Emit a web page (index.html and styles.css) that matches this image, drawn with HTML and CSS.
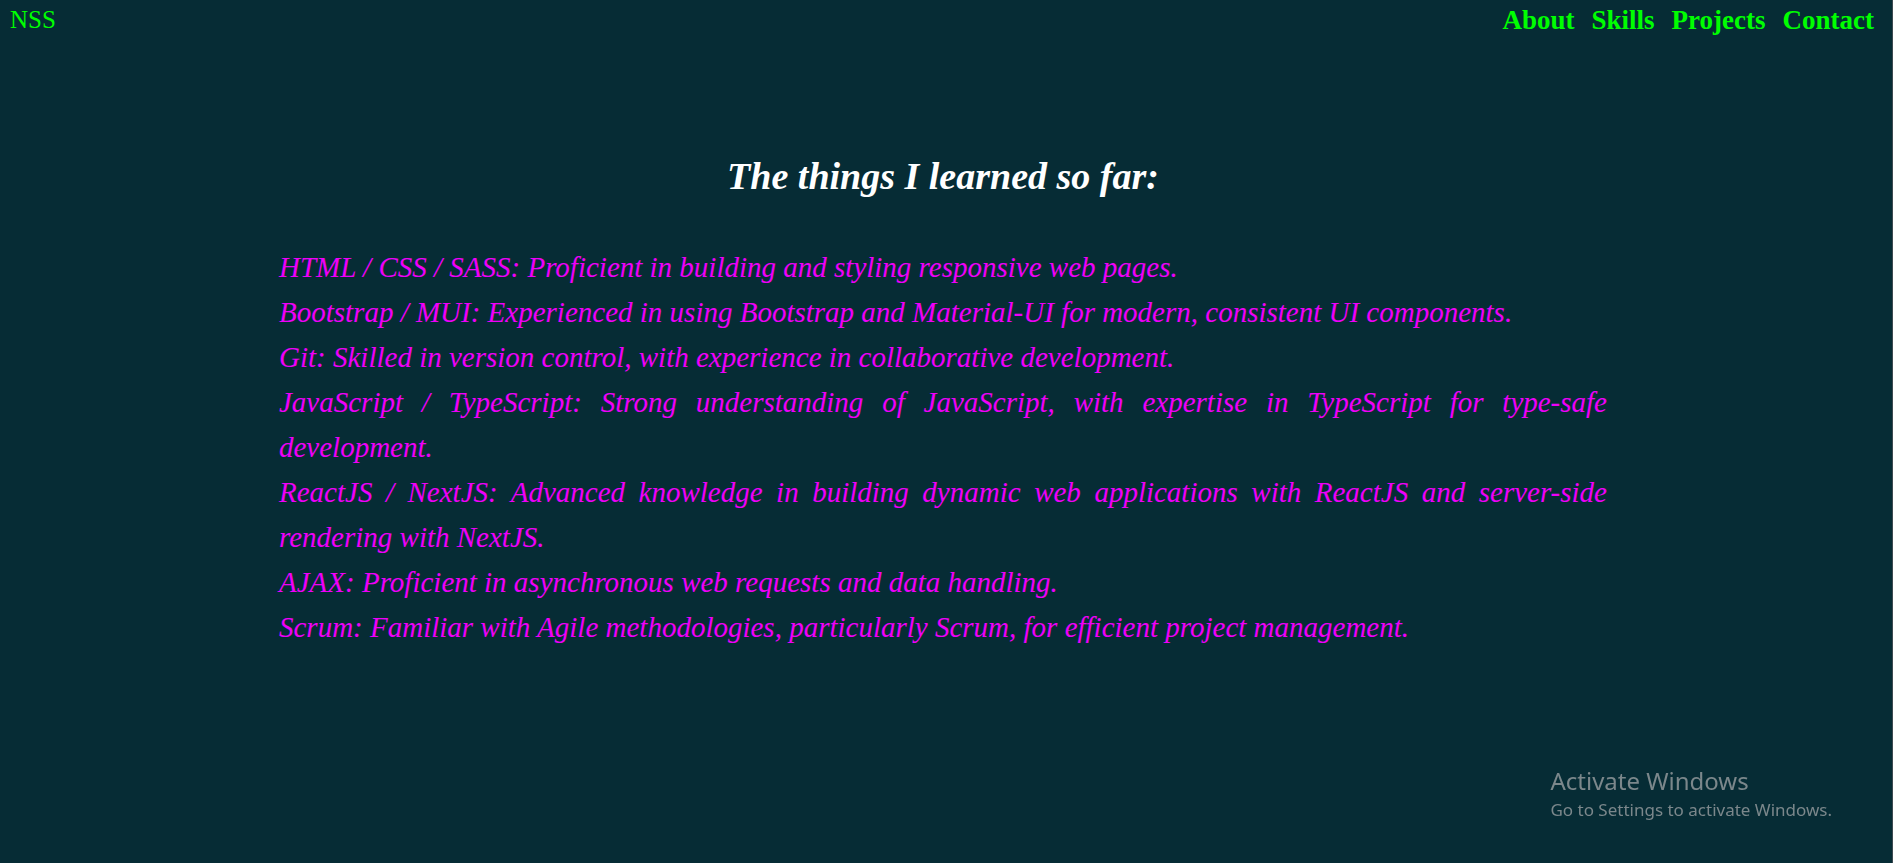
FILE: index.html
```html
<!DOCTYPE html>
<html lang="en">
<head>
<meta charset="utf-8">
<title>NSS - Skills</title>
<link rel="stylesheet" href="styles.css">
</head>
<body>
<header class="header">
  <a class="logo" href="#">NSS</a>
  <nav class="nav">
    <a href="#about">About</a>
    <a href="#skills">Skills</a>
    <a href="#projects">Projects</a>
    <a href="#contact">Contact</a>
  </nav>
</header>
<main class="skills" id="skills">
  <h1 class="title">The things I learned so far:</h1>
  <ul class="list">
    <li>HTML / CSS / SASS: Proficient in building and styling responsive web pages.</li>
    <li>Bootstrap / MUI: Experienced in using Bootstrap and Material-UI for modern, consistent UI components.</li>
    <li>Git: Skilled in version control, with experience in collaborative development.</li>
    <li>JavaScript / TypeScript: Strong understanding of JavaScript, with expertise in TypeScript for type-safe development.</li>
    <li>ReactJS / NextJS: Advanced knowledge in building dynamic web applications with ReactJS and server-side rendering with NextJS.</li>
    <li>AJAX: Proficient in asynchronous web requests and data handling.</li>
    <li>Scrum: Familiar with Agile methodologies, particularly Scrum, for efficient project management.</li>
  </ul>
</main>
<aside class="watermark">
  <p class="watermark-title">Activate Windows</p>
  <p class="watermark-text">Go to Settings to activate Windows.</p>
</aside>
</body>
</html>
```
FILE: styles.css
```css
* {
  box-sizing: border-box;
  margin: 0;
  padding: 0;
}

body {
  min-height: 100vh;
  background: #062c35;
  border-right: 1px solid #3c4a50;
  font-family: "Liberation Serif", "Times New Roman", serif;
}

.header {
  display: flex;
  justify-content: space-between;
  padding: 4px 18px 0 10px;
  font-size: 27px;
  line-height: 32px;
}

.header a {
  color: #00ff00;
  text-decoration: none;
}

.logo {
  font-size: 25px;
}

.nav {
  display: flex;
  gap: 17px;
  font-weight: bold;
}

.skills {
  padding: 112px 285px 0 279px;
}

.title {
  color: #ffffff;
  font-size: 38px;
  font-style: italic;
  line-height: 56px;
  text-align: center;
}

.list {
  margin-top: 41px;
  color: #ee00f8;
  font-size: 29px;
  font-style: italic;
  line-height: 45px;
  list-style: none;
  text-align: justify;
}

.watermark {
  position: fixed;
  right: 61px;
  bottom: 40px;
  color: #7b878b;
  font-family: "Noto Sans", "Open Sans", sans-serif;
}

.watermark-title {
  font-size: 24px;
  line-height: 32px;
}

.watermark-text {
  font-size: 17px;
  line-height: 26px;
}
```
